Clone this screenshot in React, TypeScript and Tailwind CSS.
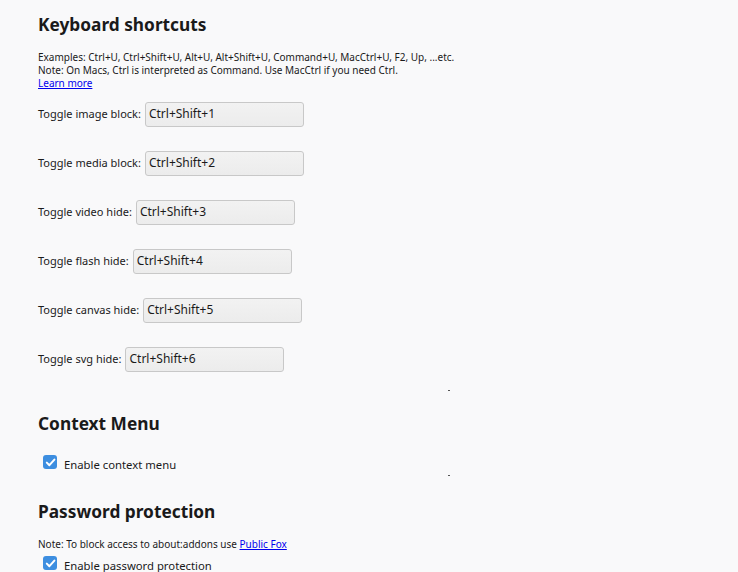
const shortcuts = [
  { label: "Toggle image block:", value: "Ctrl+Shift+1" },
  { label: "Toggle media block:", value: "Ctrl+Shift+2" },
  { label: "Toggle video hide:", value: "Ctrl+Shift+3" },
  { label: "Toggle flash hide:", value: "Ctrl+Shift+4" },
  { label: "Toggle canvas hide:", value: "Ctrl+Shift+5" },
  { label: "Toggle svg hide:", value: "Ctrl+Shift+6" },
];

function Check({ label }: { label: string }) {
  return (
    <label className="flex items-center h-[20px] pl-[5px] text-[11.3px]">
      <span className="w-[14px] h-[14px] rounded-[3px] bg-[#3d8ee0] flex items-center justify-center mr-[7px] -mt-[4px]">
        <svg width="11" height="11" viewBox="0 0 11 11">
          <path d="M1.8 5.6 L4.4 8.2 L9.4 2.6" stroke="#fff" strokeWidth="2" fill="none" strokeLinecap="round" strokeLinejoin="round" />
        </svg>
      </span>
      <span className="mt-[3px]">{label}</span>
    </label>
  );
}

function Dot() {
  return (
    <div className="h-[1px] relative">
      <span className="absolute left-[410px] top-0 w-[2px] h-[1px] bg-[#555]" />
    </div>
  );
}

export default function App() {
  return (
    <div
      className="min-h-[572px] bg-[#f9f9fa] text-[#1a1a1a] pl-[38px]"
      style={{ fontFamily: '"Noto Sans", "Open Sans", sans-serif' }}
    >
      <h1 className="pt-[12px] text-[17.3px] leading-[26px] font-bold">Keyboard shortcuts</h1>

      <div className="mt-[13px] text-[10px] leading-[13px]">
        <div>Examples: Ctrl+U, Ctrl+Shift+U, Alt+U, Alt+Shift+U, Command+U, MacCtrl+U, F2, Up, ...etc.</div>
        <div>Note: On Macs, Ctrl is interpreted as Command. Use MacCtrl if you need Ctrl.</div>
        <a href="#" className="text-[#0000ee] underline">Learn more</a>
      </div>

      <div className="mt-[12px] flex flex-col gap-[25px]">
        {shortcuts.map((s) => (
          <div key={s.value} className="flex items-center h-[24px] text-[11px]">
            <span>{s.label}</span>
            <div className="ml-[4px] w-[159px] h-[25px] border border-[#c8c8c8] rounded-[3px] bg-gradient-to-b from-[#f2f2f2] to-[#ececec] px-[3px] flex items-center text-[12px]">
              {s.value}
            </div>
          </div>
        ))}
      </div>

      <div className="mt-[19px]">
        <Dot />
      </div>

      <h2 className="mt-[20px] text-[17.3px] leading-[26px] font-bold">Context Menu</h2>
      <div className="mt-[17px]">
        <Check label="Enable context menu" />
      </div>
      <div className="mt-[1px]">
        <Dot />
      </div>

      <h2 className="mt-[23px] text-[17.3px] leading-[26px] font-bold">Password protection</h2>
      <div className="mt-[13px] text-[10px] leading-[13px]">
        Note: To block access to about:addons use{" "}
        <a href="#" className="text-[#0000ee] underline">Public Fox</a>
      </div>
      <div className="mt-[4px]">
        <Check label="Enable password protection" />
      </div>
    </div>
  );
}
